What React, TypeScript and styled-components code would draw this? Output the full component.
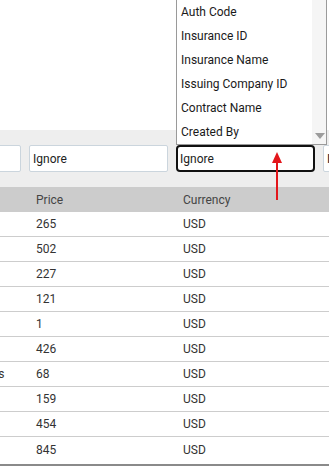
import React from 'react'
import styled, { createGlobalStyle } from 'styled-components'

const GlobalStyle = createGlobalStyle`
  html, body {
    margin: 0;
    padding: 0;
    background: #fff;
    overflow: hidden;
  }
  body {
    font-family: Roboto, 'Liberation Sans', sans-serif;
    font-size: 12px;
    color: #222;
  }
`

const COL = 147

const Page = styled.div`
  position: relative;
  width: 329px;
  height: 466px;
  display: flex;
  flex-direction: column;
  overflow: hidden;
`

const TopArea = styled.div`
  height: 130px;
  flex: none;
`

// table is scrolled sideways, first column mostly out of view
const Viewport = styled.div`
  flex: 1;
  overflow: hidden;
  display: flex;
  flex-direction: column;
`

const Grid = styled.div`
  margin-left: -119px;
  width: ${COL * 4}px;
  flex: 1;
  display: flex;
  flex-direction: column;
`

const FilterRow = styled.div`
  display: grid;
  grid-template-columns: repeat(4, ${COL}px);
  height: 57px;
  padding-top: 15px;
  box-sizing: border-box;
  background: #eeeeee;
`

const FilterInput = styled.div<{ $focused?: boolean }>`
  margin-left: 1px;
  width: 139px;
  height: 27px;
  box-sizing: border-box;
  background: #fff;
  display: flex;
  align-items: center;
  font-size: 12px;
  color: #222;
  white-space: nowrap;
  overflow: hidden;
  border: ${p => (p.$focused ? '2px solid #111' : '1px solid #cbd5dd')};
  border-radius: ${p => (p.$focused ? '4px' : '2px')};
  padding-left: ${p => (p.$focused ? '2px' : '3px')};
`

const HeaderRow = styled.div`
  display: grid;
  grid-template-columns: repeat(4, ${COL}px);
  height: 25px;
  background: #cccccc;
  color: #444;
`

const Row = styled.div`
  display: grid;
  grid-template-columns: repeat(4, ${COL}px);
  height: 25px;
  box-sizing: border-box;
  border-bottom: 1px solid #cdcdcd;
  color: #333;
  &:last-child {
    border-bottom: none;
  }
`

const Cell = styled.div`
  padding-left: 8px;
  display: flex;
  align-items: center;
  white-space: nowrap;
  overflow: hidden;
`

const HScroll = styled.div`
  height: 2px;
  background: #8a8a8a;
  flex: none;
`

const ListBox = styled.div`
  position: absolute;
  top: -1px;
  left: 176px;
  width: 151px;
  height: 146px;
  box-sizing: border-box;
  border: 1px solid #9a9a9a;
  background: #fff;
  display: flex;
  z-index: 5;
`

const Options = styled.div`
  flex: 1;
  display: flex;
  flex-direction: column;
`

const Option = styled.div`
  height: 24px;
  display: flex;
  align-items: center;
  padding-left: 4px;
  color: #1a1a1a;
  white-space: nowrap;
`

const ScrollTrack = styled.div`
  width: 14px;
  background: #f5f5f5;
  display: flex;
  flex-direction: column;
  justify-content: flex-end;
  align-items: center;
  padding: 0 0 5px 1px;
  box-sizing: border-box;
`

const Arrow = styled.svg`
  position: absolute;
  left: 271px;
  top: 152px;
  z-index: 6;
`

const filters = ['Ignore', 'Ignore', 'Ignore', 'Ignore']
const options = ['Auth Code', 'Insurance ID', 'Insurance Name', 'Issuing Company ID', 'Contract Name', 'Created By']
const prices = [265, 502, 227, 121, 1, 426, 68, 159, 454, 845]

export default function App() {
  return (
    <>
      <GlobalStyle />
      <Page>
        <TopArea />
        <Viewport>
          <Grid>
            <FilterRow>
              {filters.map((f, i) => (
                <div key={i}>
                  <FilterInput $focused={i === 2}>{f}</FilterInput>
                </div>
              ))}
            </FilterRow>
            <HeaderRow>
              <Cell>Service</Cell>
              <Cell>Price</Cell>
              <Cell>Currency</Cell>
              <Cell>Status</Cell>
            </HeaderRow>
            {prices.map((p, i) => (
              <Row key={i}>
                <Cell>{i === 6 ? 'Hospital Lab Services' : ''}</Cell>
                <Cell>{p}</Cell>
                <Cell>USD</Cell>
                <Cell />
              </Row>
            ))}
          </Grid>
          <HScroll />
        </Viewport>
        <ListBox>
          <Options>
            {options.map(o => (
              <Option key={o}>{o}</Option>
            ))}
          </Options>
          <ScrollTrack>
            <svg width="10" height="6" viewBox="0 0 10 6">
              <polygon points="0,0 10,0 5,6" fill="#9c9c9c" />
            </svg>
          </ScrollTrack>
        </ListBox>
        <Arrow width="12" height="50" viewBox="0 0 12 50">
          <polygon points="6,0 11,11 1,11" fill="#e3161b" />
          <rect x="5" y="10" width="2" height="38" fill="#e3161b" />
        </Arrow>
      </Page>
    </>
  )
}
